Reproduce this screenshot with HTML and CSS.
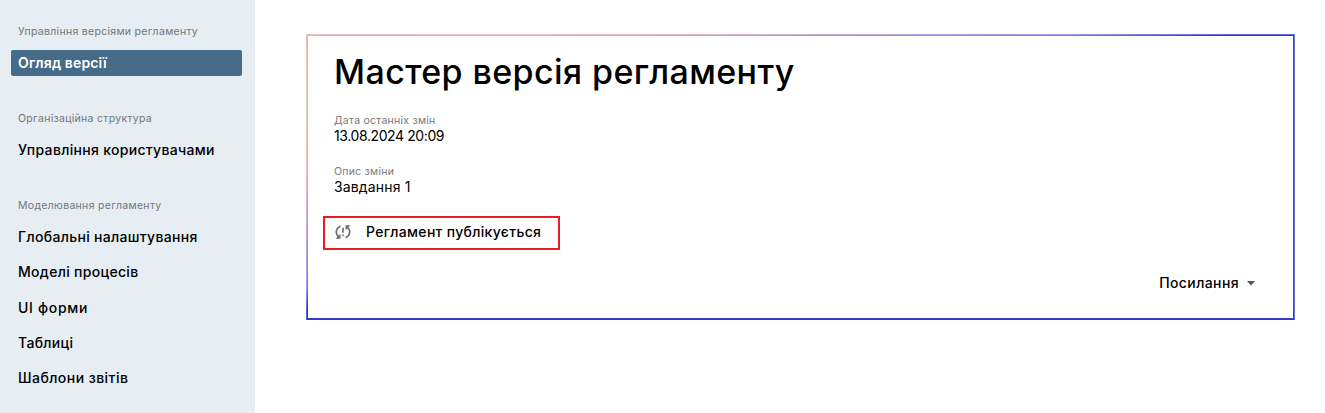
FILE: index.html
```html
<!DOCTYPE html>
<html lang="uk">
<head>
<meta charset="utf-8">
<title>Огляд версії</title>
<link rel="stylesheet" href="styles.css">
</head>
<body>
<div class="layout">
<nav class="sidebar">
  <section class="group">
    <h2 class="caption">Управління версіями регламенту</h2>
    <a class="item active">Огляд версії</a>
  </section>
  <section class="group">
    <h2 class="caption">Організаційна структура</h2>
    <a class="item">Управління користувачами</a>
  </section>
  <section class="group">
    <h2 class="caption">Моделювання регламенту</h2>
    <a class="item">Глобальні налаштування</a>
    <a class="item">Моделі процесів</a>
    <a class="item forms">UI форми</a>
    <a class="item">Таблиці</a>
    <a class="item templates">Шаблони звітів</a>
  </section>
</nav>
<main class="content">
  <article class="card">
    <h1 class="title">Мастер версія регламенту</h1>
    <dl class="field">
      <dt class="label">Дата останніх змін</dt>
      <dd class="value date">13.08.2024 20:09</dd>
    </dl>
    <dl class="field">
      <dt class="label">Опис зміни</dt>
      <dd class="value note">Завдання 1</dd>
    </dl>
    <div class="status">
      <svg class="sync" viewBox="0 0 24 24"><path d="M3 12c0 2.21.91 4.2 2.36 5.64L3 20h6v-6l-2.24 2.24C5.68 15.15 5 13.66 5 12c0-2.61 1.67-4.83 4-5.65V4.26C5.55 5.15 3 8.27 3 12zm8 5h2v-2h-2v2zM21 4h-6v6l2.24-2.24C18.32 8.85 19 10.34 19 12c0 2.61-1.67 4.83-4 5.65v2.09c3.45-.89 6-4.01 6-7.74 0-2.21-.91-4.2-2.36-5.64L21 4zm-10 9h2V7h-2v6z"/></svg>
      <span class="status-text">Регламент публікується</span>
    </div>
    <div class="actions">
      <span class="link-text">Посилання</span>
      <svg class="caret" viewBox="0 0 8 5"><path d="M0 0h8L4 4.5z"/></svg>
    </div>
  </article>
</main>
</div>
</body>
</html>
```
FILE: styles.css
```css
* { box-sizing: border-box; }
body, h1, h2, dl, dd { margin: 0; }
body { font-family: Inter, "Liberation Sans", sans-serif; font-size: 14px; color: #000; background: #fff; }
.layout { display: flex; height: 413px; overflow: hidden; }

.sidebar { width: 255px; flex: none; background: #e6edf3; padding: 23px 13px 0 11px; }
.group { margin-bottom: 34px; }
.caption { height: 18px; padding-left: 7px; margin-bottom: 9px; font-size: 10.5px; line-height: 18px; font-weight: 400; color: #73777a; letter-spacing: .3px; white-space: nowrap; }
.item { display: flex; align-items: center; height: 26px; margin-bottom: 9.3px; padding: 0 0 1px 7px; border-radius: 2px; letter-spacing: .31px; font-weight: 450; white-space: nowrap; }
.group .item:last-child { margin-bottom: 0; }
.active { padding-bottom: 2px; background: #456b88; color: #fff; font-weight: 600; letter-spacing: .14px; }
.forms { letter-spacing: .7px; }
.templates { letter-spacing: .45px; }

.content { flex: 1; padding: 34px 30px 0 51px; }
.card {
  height: 286px;
  padding: 15px 37px 0 26px;
  border: 2px solid transparent;
  background:
    linear-gradient(#fff, #fff) padding-box,
    linear-gradient(#ffffff40, #ffffff40) top / 100% 1px no-repeat border-box,
    linear-gradient(#ffffff40, #ffffff40) right / 1px 100% no-repeat border-box,
    linear-gradient(#ffffff40, #ffffff40) left / 1px 100% no-repeat border-box,
    linear-gradient(#f2a6ad 0, #efb0aa 8%, #cbcaa0 23%, #efaaab 42%, #dba0bf 55%, #b28fd0 70%, #7c7ceb 88%, #2f36c8 96%) left / 2px 100% no-repeat border-box,
    linear-gradient(90deg, #eda8b0 0, #eaa6b2 26%, #d39cbd 42%, #a98bd5 57%, #7c7be9 77%, #3038c9 93%) top / 100% 2px no-repeat border-box,
    linear-gradient(#3038c9, #3038c9) bottom / 100% 1px no-repeat border-box,
    linear-gradient(#3a42cf, #3a42cf) border-box;
}
.title { height: 42px; font-size: 34px; line-height: 42px; font-weight: 450; letter-spacing: .4px; white-space: nowrap; margin-bottom: 19px; }
.field { height: 33px; margin-bottom: 18px; }
.label { font-size: 10.5px; line-height: 17px; color: #77797b; letter-spacing: .25px; }
.value { line-height: 13px; }
.date { letter-spacing: -.4px; }
.note { letter-spacing: .15px; }
.status { display: flex; align-items: center; width: 237px; height: 34px; margin: 20px 0 0 -11px; padding: 0 0 3px 8px; border: 2px solid #ec1c24; }
.sync { width: 20px; height: 20px; margin-right: 13px; fill: #707070; }
.status-text { letter-spacing: .32px; font-weight: 450; white-space: nowrap; }
.actions { display: flex; align-items: center; justify-content: flex-end; height: 24px; margin: 20px 1px 0 0; }
.link-text { font-weight: 450; letter-spacing: .4px; }
.caret { width: 8px; height: 5px; margin: 2px 0 0 8px; fill: #555; }
```
